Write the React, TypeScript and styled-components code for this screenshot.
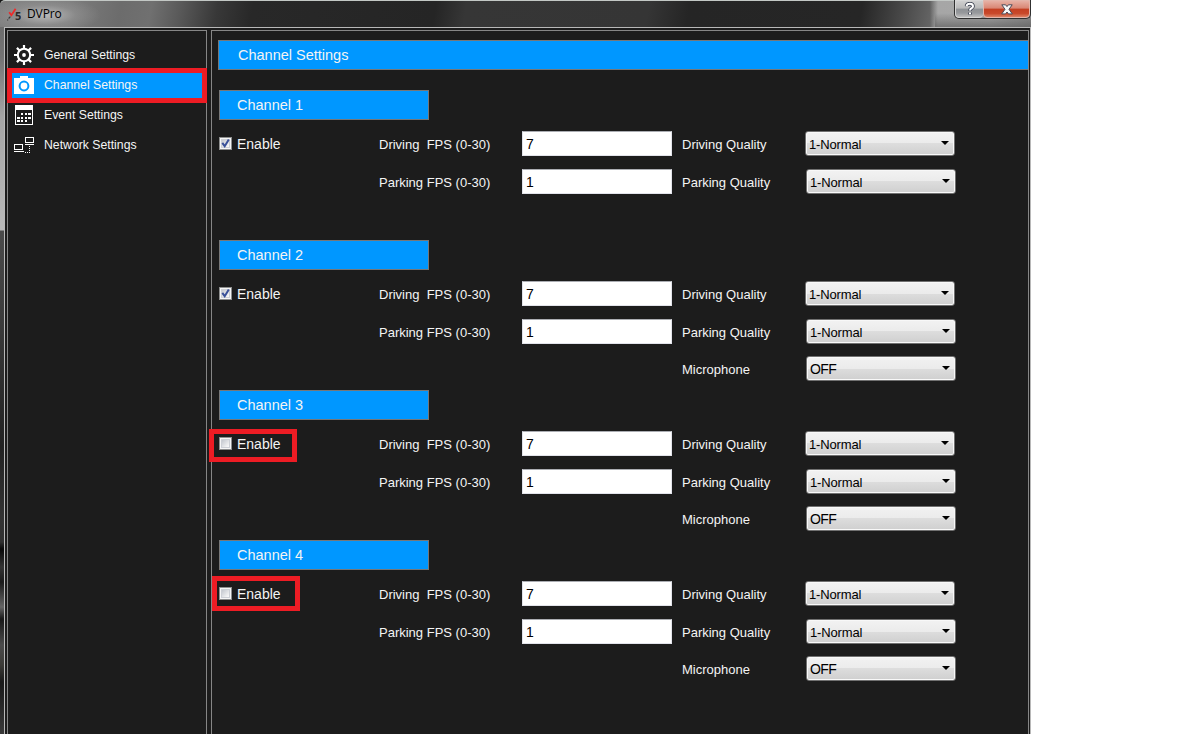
import React from "react";
import styled, { createGlobalStyle } from "styled-components";

const GlobalStyle = createGlobalStyle`
  * { box-sizing: border-box; }
  html, body { margin: 0; background: #fff; overflow: hidden; }
  body { font-family: "Liberation Sans", Arial, sans-serif; font-size: 13px; color: #f4f4f4; }
`;

const Window = styled.div`
  width: 1031px;
  height: 734px;
  display: flex;
  flex-direction: column;
  background: #151515;
`;

const TitleBar = styled.header`
  height: 27px;
  flex: none;
  display: flex;
  align-items: flex-start;
  padding-left: 7px;
  border-top: 1px solid #c3c8c5;
  border-radius: 5px 0 0 0;
  background:
    radial-gradient(ellipse 56px 18px at 45px 14px, rgba(200, 200, 200, 0.8), rgba(160, 160, 160, 0.4) 55%, transparent),
    linear-gradient(transparent 45%, rgba(90, 90, 90, 0.7)) 935px 0 / 96px 27px no-repeat,
    linear-gradient(90deg, transparent 930px, #a6a6a6 938px, #a8a8a8 990px, #8c8c8c 1031px),
    linear-gradient(100deg, #808080 0, #7c7c7c 70px, #6c6c6c 120px, #707070 150px, #585858 180px, #383838 215px, #282828 250px, #252525 430px, #363636 460px, #353535 640px, #252525 680px, #262626 850px, #484848 890px, #707070 932px);
`;

const AppTitle = styled.div`
  flex: 1;
  display: flex;
  align-items: center;
  gap: 6px;
  height: 26px;
  font: 12px/16px "Open Sans", "Noto Sans", sans-serif;
  letter-spacing: -0.1px;
  color: #000;
  svg { display: block; }
`;

const WindowButtons = styled.div`
  display: flex;
  width: 77px;
  height: 19px;
  margin-top: -1px;
  border: 1px solid #303030;
  border-top: 0;
  border-radius: 0 0 5px 5px;
  overflow: hidden;
`;

const WindowButton = styled.button<{ $close?: boolean }>`
  width: ${(p) => (p.$close ? 47 : 28)}px;
  padding: 0;
  display: flex;
  align-items: center;
  justify-content: center;
  border: 1px solid ${(p) => (p.$close ? "#e3b5aa" : "#d6d6d6")};
  border-right-width: ${(p) => (p.$close ? 1 : 0)}px;
  border-radius: 0 0 4px 4px;
  background: ${(p) =>
    p.$close
      ? "linear-gradient(#e6b0a4 0, #d98674 45%, #c33f22 50%, #c9492b 78%, #dd8062 100%)"
      : "linear-gradient(#cfcfcf 0, #b9b9b9 45%, #8e9195 50%, #97999c 75%, #bdbdbd 100%)"};
`;

const Client = styled.div`
  flex: 1;
  min-height: 0;
  display: flex;
  background: linear-gradient(#6d6d6d, #747474 30px, #a5a5a5 90px, #b9b9b9 203px, #4a4a4a 204px, #3a3a3a 300px, #222 420px, #333 490px, #303030 515px, #080808 522px, #343434 540px, #1a1a1a 555px, #656565 580px, #181818 592px, #4b4b4b 618px, #3c3b37 638px, #191919 655px, #393939 707px);
  padding-left: 4px;
`;

const ClientEdge = styled.div`
  flex: 1;
  display: flex;
  gap: 4px;
  padding: 2px 1px 0 2px;
  border: solid #b8b8b8;
  border-width: 1px 1px 0 1px;
  background: #1c1c1c;
`;

const Sidebar = styled.nav`
  width: 200px;
  flex: none;
  padding-top: 9px;
  border: solid #868686;
  border-width: 1px 1px 0 1px;
`;

const NavItem = styled.a<{ $active?: boolean }>`
  position: relative;
  height: 30px;
  display: flex;
  align-items: center;
  gap: 10px;
  padding-left: 6px;
  font-size: 12.25px;
  line-height: 16px;
  color: #f5f5f5;
  background: ${(p) => (p.$active ? "#0097ff" : "transparent")};
  svg { display: block; }
`;

const Highlight = styled.span<{ $top: number; $left: number; $w: number; $h: number }>`
  position: absolute;
  top: ${(p) => p.$top}px;
  left: ${(p) => p.$left}px;
  width: ${(p) => p.$w}px;
  height: ${(p) => p.$h}px;
  border: 5px solid #ed1c24;
  pointer-events: none;
`;

const Main = styled.main`
  flex: 1;
  display: flex;
  flex-direction: column;
  padding: 9px 0 0 6px;
  border: solid #868686;
  border-width: 1px 1px 0 1px;
`;

const PageTitle = styled.h1`
  flex: none;
  height: 30px;
  margin: 0 0 20px;
  padding-left: 19px;
  border: 1px solid #777;
  border-right: 0;
  background: #0097ff;
  font-size: 14.5px;
  font-weight: 400;
  line-height: 28px;
`;

const ChannelSection = styled.section`
  height: 150px;
  flex: none;
  padding-left: 1px;
`;

const ChannelTitle = styled.h2`
  width: 210px;
  height: 30px;
  margin: 0 0 11px;
  padding-left: 17px;
  border: 1px solid #777;
  background: #0097ff;
  font-size: 14.5px;
  font-weight: 400;
  line-height: 28px;
`;

const Fields = styled.div`
  display: grid;
  grid-template-columns: 160px 143px 160px 123px 151px;
  grid-template-rows: 25px 25px 25px;
  row-gap: 13px;
`;

const EnableLabel = styled.label`
  position: relative;
  display: flex;
  align-items: center;
  gap: 5px;
  font-size: 14px;
  line-height: 16px;
  padding-top: 1px;
`;

const CheckBox = styled.span`
  width: 13px;
  height: 13px;
  margin-top: -2px;
  border: 1px solid #8e8f8f;
  background: linear-gradient(135deg, #b4b9c2, #f6f6f6 75%);
  box-shadow: inset 0 0 0 1px #f6f6f6, inset 0 0 0 2px #cdd0d6;
  svg { display: block; }
`;

const FieldLabel = styled.span<{ $col: number; $row: number }>`
  grid-column: ${(p) => p.$col};
  grid-row: ${(p) => p.$row};
  padding-top: ${(p) => (p.$row === 3 ? 0 : 1)}px;
  line-height: 25px;
  white-space: pre;
`;

const NumberInput = styled.input<{ $row: number }>`
  grid-column: 3;
  grid-row: ${(p) => p.$row};
  width: 150px;
  height: 25px;
  padding: 1px 0 1px 3px;
  border: 1px solid #e2e3ea;
  border-top-color: #abadb3;
  background: #fff;
  color: #000;
  font: 14px "Liberation Sans", Arial, sans-serif;
`;

const Select = styled.div<{ $row: number }>`
  grid-column: 5;
  grid-row: ${(p) => p.$row};
  display: flex;
  align-items: center;
  justify-content: space-between;
  width: 150px;
  height: 25px;
  margin-left: ${(p) => (p.$row === 1 ? 0 : 1)}px;
  margin-top: ${(p) => (p.$row === 3 ? -1 : 0)}px;
  padding: 1px 5px 0 3px;
  border: 1px solid #707070;
  border-radius: 3px;
  box-shadow: inset 0 0 0 1px #f8f8f8;
  background: linear-gradient(#f2f2f2, #ebebeb 50%, #ddd 50%, #cfcfcf);
  color: #000;
  font-size: ${(p) => (p.$row === 3 ? 14 : 13)}px;
  letter-spacing: ${(p) => (p.$row === 3 ? -0.6 : -0.15)}px;
  svg { display: block; margin-top: -2px; }
`;

const LogoIcon = () => (
  <svg width="14" height="15" viewBox="0 0 14 15">
    <path d="M2.2 5.2 4.4 8.2 8.6 1.8" fill="none" stroke="#ee2a2a" strokeWidth="1.8" />
    <path d="M0 13h1.2M1.6 11.5l1.8-1.8" stroke="#3a3a3a" strokeWidth="1.2" />
    <text x="8" y="13" fontFamily="Open Sans" fontSize="11" fontWeight="700" fill="#292929">5</text>
  </svg>
);

const GearIcon = () => (
  <svg width="20" height="20" viewBox="0 0 20 20" fill="none" stroke="#fff">
    <circle cx="10" cy="10" r="6.2" strokeWidth="2.1" />
    <circle cx="10" cy="10" r="1.9" fill="#fff" stroke="none" />
    <path strokeWidth="2.2" d="M10 0v3.6M10 16.4V20M0 10h3.6M16.4 10H20M2.9 2.9l2.6 2.6M14.5 14.5l2.6 2.6M17.1 2.9l-2.6 2.6M5.5 14.5l-2.6 2.6" />
  </svg>
);

const CameraIcon = () => (
  <svg width="20" height="18" viewBox="0 0 20 18">
    <path fill="#fff" d="M0 2h6V0h8v2h6v16H0z" />
    <circle cx="10" cy="10" r="4.4" fill="none" stroke="#0097ff" strokeWidth="2" />
  </svg>
);

const CalendarIcon = () => (
  <svg width="20" height="20" viewBox="0 0 20 20" shapeRendering="crispEdges">
    <path fill="#fff" fillRule="evenodd" d="M1 0h18v20H1zM2 5v14h16V5z" />
    <path fill="#fff" d="M7 8h2v2H7zM11 8h2v2h-2zM14 8h3v2h-3zM3 12h3v2H3zM7 12h2v2H7zM11 12h2v2h-2zM14 12h3v2h-3zM3 15h3v2H3zM7 15h2v2H7zM11 15h2v2h-2z" />
  </svg>
);

const NetworkIcon = () => (
  <svg width="20" height="18" viewBox="0 0 20 18" fill="none" stroke="#fff" shapeRendering="crispEdges">
    <path d="M11.5 1.5h8v5h-8zM.5 8.5h8v5h-8z" />
    <path d="M11 8.5h9M0 15.5h10" />
    <path strokeDasharray="1 1" d="M11 16.5h5M15.5 10v7" />
  </svg>
);

const HelpGlyph = () => (
  <svg width="12" height="14" viewBox="0 0 12 14" fill="none" strokeLinejoin="round">
    <path d="M2.8 4.3V3.2Q3.3 1.8 6 1.8t3 2.4q0 1.3-1.7 2.2Q6 7.2 6 8.7M6 10.4v2" stroke="#454a59" strokeWidth="3.8" />
    <path d="M2.8 4.2V3.2Q3.3 1.8 6 1.8t3 2.4q0 1.3-1.7 2.2Q6 7.2 6 8.5M6 10.5v1.8" stroke="#fff" strokeWidth="2" />
  </svg>
);

const CloseGlyph = () => (
  <svg width="12" height="11" viewBox="0 0 12 11">
    <path d="M.8.8h3.8L6 2.6 7.4.8h3.8L8 5.3l3.3 4.6H7.5L6 8 4.5 9.9H.7L4 5.3z" fill="#f7f7f7" stroke="#4c4a58" strokeWidth="1" />
  </svg>
);

const Check = () => (
  <svg width="11" height="11" viewBox="0 0 11 11">
    <path d="M2.3 4.8 4.7 8.2 8.8 1.4" fill="none" stroke="#3a5199" strokeWidth="2" />
  </svg>
);

const Arrow = () => (
  <svg width="8" height="4" viewBox="0 0 8 4">
    <path d="M0 0h8L4 4z" fill="#000" />
  </svg>
);

const navItems = [
  { label: "General Settings", Icon: GearIcon },
  { label: "Channel Settings", Icon: CameraIcon, active: true },
  { label: "Event Settings", Icon: CalendarIcon },
  { label: "Network Settings", Icon: NetworkIcon },
];

type Mark = { $top: number; $left: number; $w: number; $h: number };
type ChannelData = { id: number; enabled: boolean; microphone?: string; mark?: Mark };

const channels: ChannelData[] = [
  { id: 1, enabled: true },
  { id: 2, enabled: true, microphone: "OFF" },
  { id: 3, enabled: false, microphone: "OFF", mark: { $top: -2, $left: -10, $w: 88, $h: 33 } },
  { id: 4, enabled: false, microphone: "OFF", mark: { $top: -5, $left: -7, $w: 88, $h: 35 } },
];

const Channel = ({ id, enabled, microphone, mark }: ChannelData) => (
  <ChannelSection>
    <ChannelTitle>Channel {id}</ChannelTitle>
    <Fields>
      <EnableLabel>
        <CheckBox>{enabled && <Check />}</CheckBox>
        Enable
        {mark && <Highlight {...mark} />}
      </EnableLabel>
      <FieldLabel $col={2} $row={1}>{"Driving  FPS (0-30)"}</FieldLabel>
      <NumberInput $row={1} defaultValue="7" />
      <FieldLabel $col={4} $row={1}>Driving Quality</FieldLabel>
      <Select $row={1}>1-Normal<Arrow /></Select>
      <FieldLabel $col={2} $row={2}>Parking FPS (0-30)</FieldLabel>
      <NumberInput $row={2} defaultValue="1" />
      <FieldLabel $col={4} $row={2}>Parking Quality</FieldLabel>
      <Select $row={2}>1-Normal<Arrow /></Select>
      {microphone && (
        <>
          <FieldLabel $col={4} $row={3}>Microphone</FieldLabel>
          <Select $row={3}>{microphone}<Arrow /></Select>
        </>
      )}
    </Fields>
  </ChannelSection>
);

export default function App() {
  return (
    <>
      <GlobalStyle />
      <Window>
        <TitleBar>
          <AppTitle><LogoIcon />DVPro</AppTitle>
          <WindowButtons>
            <WindowButton aria-label="Help"><HelpGlyph /></WindowButton>
            <WindowButton $close aria-label="Close"><CloseGlyph /></WindowButton>
          </WindowButtons>
        </TitleBar>
        <Client>
          <ClientEdge>
            <Sidebar>
              {navItems.map(({ label, Icon, active }) => (
                <NavItem key={label} $active={active}>
                  <Icon />
                  {label}
                  {active && <Highlight $top={-2} $left={-1} $w={200} $h={35} />}
                </NavItem>
              ))}
            </Sidebar>
            <Main>
              <PageTitle>Channel Settings</PageTitle>
              {channels.map((c) => <Channel key={c.id} {...c} />)}
            </Main>
          </ClientEdge>
        </Client>
      </Window>
    </>
  );
}
